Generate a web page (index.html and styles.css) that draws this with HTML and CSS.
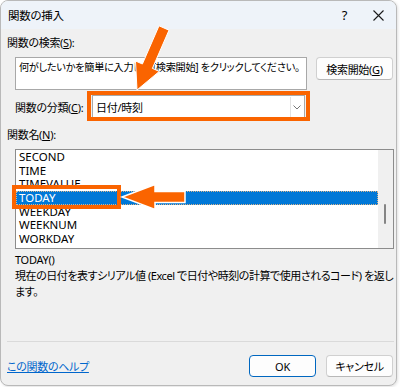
FILE: index.html
```html
<!DOCTYPE html>
<html lang="ja">
<head>
    <meta charset="UTF-8">
    <meta name="viewport" content="width=device-width, initial-scale=1.0">
    <title>関数の挿入</title>
    <link rel="stylesheet" href="styles.css">
</head>
<body>
    <div class="page">
        <div class="dialog">
            <div class="titlebar">
                <span class="title">関数の挿入</span>
                <span class="tb-help">?</span>
                <span class="tb-close">
                    <svg width="11" height="11" viewBox="0 0 11 11"><path d="M0.5 0.5L10.5 10.5M10.5 0.5L0.5 10.5" stroke="#1a1a1a" stroke-width="1.1" fill="none"/></svg>
                </span>
            </div>

            <div class="content">
                <div class="label">関数の検索(<u>S</u>):</div>
                <div class="search-row">
                    <div class="search-box">何がしたいかを簡単に入力して [検索開始] をクリックしてください。</div>
                    <button type="button" class="btn btn-search">検索開始(<u>G</u>)</button>
                </div>

                <div class="category-row">
                    <span class="category-label">関数の分類(<u>C</u>):</span>
                    <div class="select">
                        <span class="select-value">日付/時刻</span>
                        <span class="select-arrow">
                            <svg width="8" height="5" viewBox="0 0 8 5"><path d="M0.5 0.5L4 4L7.5 0.5" stroke="#777" stroke-width="1" fill="none"/></svg>
                        </span>
                    </div>
                </div>

                <div class="label label-list">関数名(<u>N</u>):</div>
                <div class="listbox">
                    <ul class="items" id="funcList"></ul>
                    <div class="scrollbar"><div class="thumb"></div></div>
                </div>

                <div class="syntax">TODAY()</div>
                <div class="desc">現在の日付を表すシリアル値 (Excel で日付や時刻の計算で使用されるコード) を返します。</div>

                <div class="sep"></div>

                <div class="footer">
                    <a href="#" class="help-link">この関数のヘルプ</a>
                    <button type="button" class="btn btn-ok">OK</button>
                    <button type="button" class="btn btn-cancel">キャンセル</button>
                </div>
            </div>
        </div>

        <!-- annotations drawn over the dialog -->
        <svg class="annot" width="400" height="387" viewBox="0 0 400 387">
            <rect x="89" y="93" width="219" height="26" fill="none" stroke="#fa6400" stroke-width="4"/>
            <rect x="14" y="187" width="105" height="20" fill="none" stroke="#fa6400" stroke-width="4"/>
            <polygon points="159,25.8 169,30.2 152.4,68.4 159.3,71.4 137,90 135.5,61 142.4,64" fill="#fa6400" stroke="#fff" stroke-width="1"/>
            <polygon points="122,197 155,184.5 155,191.5 185,191.5 185,202.5 155,202.5 155,209.5" fill="#fa6400" stroke="#fff" stroke-width="1.5"/>
        </svg>
    </div>

    <script>
        const names = ['SECOND', 'TIME', 'TIMEVALUE', 'TODAY', 'WEEKDAY', 'WEEKNUM', 'WORKDAY'];
        const list = document.getElementById('funcList');
        names.forEach(name => {
            const cls = name === 'TODAY' ? 'item selected' : 'item';
            list.innerHTML += `<li class="${cls}">${name}</li>`;
        });
    </script>
</body>
</html>
```

FILE: styles.css
```css
/* dialog base */
body {
    margin: 0;
    background: #fff;
    font-family: "Noto Sans", "Noto Sans CJK JP", sans-serif;
    font-size: 11px;
    letter-spacing: -0.3px;
    font-feature-settings: "palt";
    color: #000;
}
.page {
    position: relative;
    width: 400px;
    height: 387px;
}
.dialog {
    box-sizing: border-box;
    width: 397px;
    height: 386px;
    border: 1px solid #b9b9b9;
    border-radius: 8px;
    background: #f0f0f0;
    overflow: hidden;
    display: flex;
    flex-direction: column;
    box-shadow: 1px 1px 3px rgba(0, 0, 0, 0.12);
}
.titlebar {
    height: 28px;
    flex: none;
    display: flex;
    align-items: center;
    background: #eef3f9;
}
.title {
    padding-left: 7px;
    flex: 1;
    font-size: 11.5px;
}
.tb-help {
    font-size: 13px;
    margin-right: 26px;
}
.tb-close {
    display: flex;
    margin-right: 12px;
}
.content {
    flex: 1;
    display: flex;
    flex-direction: column;
    padding: 0 2px 8px 6px;
}
.label {
    line-height: 16px;
    margin-top: 6px;
    white-space: nowrap;
}
.search-row {
    display: flex;
    align-items: flex-start;
    margin-top: 6px;
    margin-left: 8px;
}
.search-box {
    box-sizing: border-box;
    width: 292px;
    height: 33px;
    border: 1px solid #a8a8a8;
    background: #fff;
    padding: 1px 3px;
    line-height: 16px;
    font-size: 10.2px;
    white-space: nowrap;
    overflow: hidden;
}
.btn {
    font-family: inherit;
    font-size: 11px;
    letter-spacing: -0.3px;
    font-feature-settings: "palt";
    color: #000;
    background: #fdfdfd;
    border: 1px solid #d0d0d0;
    border-bottom-color: #b8b8b8;
    border-radius: 4px;
    padding: 0;
}
.btn-search {
    width: 77px;
    height: 23px;
    margin-left: 9px;
}
.category-row {
    display: flex;
    align-items: center;
    margin-top: 5px;
    margin-left: 8px;
}
.category-label {
    width: 77px;
    flex: none;
    white-space: nowrap;
}
.select {
    box-sizing: border-box;
    width: 213px;
    height: 24px;
    background: #fff;
    border: 1px solid #a8a8a8;
    display: flex;
    align-items: center;
}
.select-value {
    flex: 1;
    padding-left: 3px;
}
.select-arrow {
    width: 12px;
    height: 20px;
    margin-right: 1px;
    border-left: 1px solid #e2e2e2;
    display: flex;
    align-items: center;
    justify-content: center;
}
.label-list {
    margin-top: 8px;
}
.listbox {
    box-sizing: border-box;
    height: 100px;
    margin-top: 6px;
    margin-left: 8px;
    border: 1px solid #8c8c8c;
    background: #fff;
    display: flex;
}
.items {
    list-style: none;
    margin: 0;
    padding: 0;
    flex: 1;
}
.item {
    box-sizing: border-box;
    height: 13.7px;
    line-height: 13.7px;
    padding-left: 3px;
    font-size: 11.5px;
    letter-spacing: 0;
}
.item.selected {
    background: #0078d7;
    color: #fff;
    outline: 1px dotted #d9b48a;
    outline-offset: -1px;
}
.scrollbar {
    width: 15px;
    background: #f0f0f0;
    position: relative;
}
.thumb {
    position: absolute;
    left: 6px;
    top: 54px;
    width: 2px;
    height: 20px;
    border-radius: 1px;
    background: #858585;
}
.syntax {
    margin-top: 3px;
    margin-left: 8px;
    line-height: 16px;
}
.desc {
    margin-left: 8px;
    line-height: 16px;
    letter-spacing: -0.45px;
}
.sep {
    margin-top: auto;
    height: 1px;
    background: #dadada;
}
.footer {
    display: flex;
    align-items: center;
    margin-top: 13px;
}
.help-link {
    flex: 1;
    color: #0066cc;
}
.btn-ok,
.btn-cancel {
    width: 67px;
    height: 22px;
}
.btn-ok {
    border: 1px solid #0067c0;
    margin-right: 10px;
}
.btn-cancel {
    margin-right: 1px;
}
.annot {
    position: absolute;
    left: 0;
    top: 0;
    pointer-events: none;
}
```
